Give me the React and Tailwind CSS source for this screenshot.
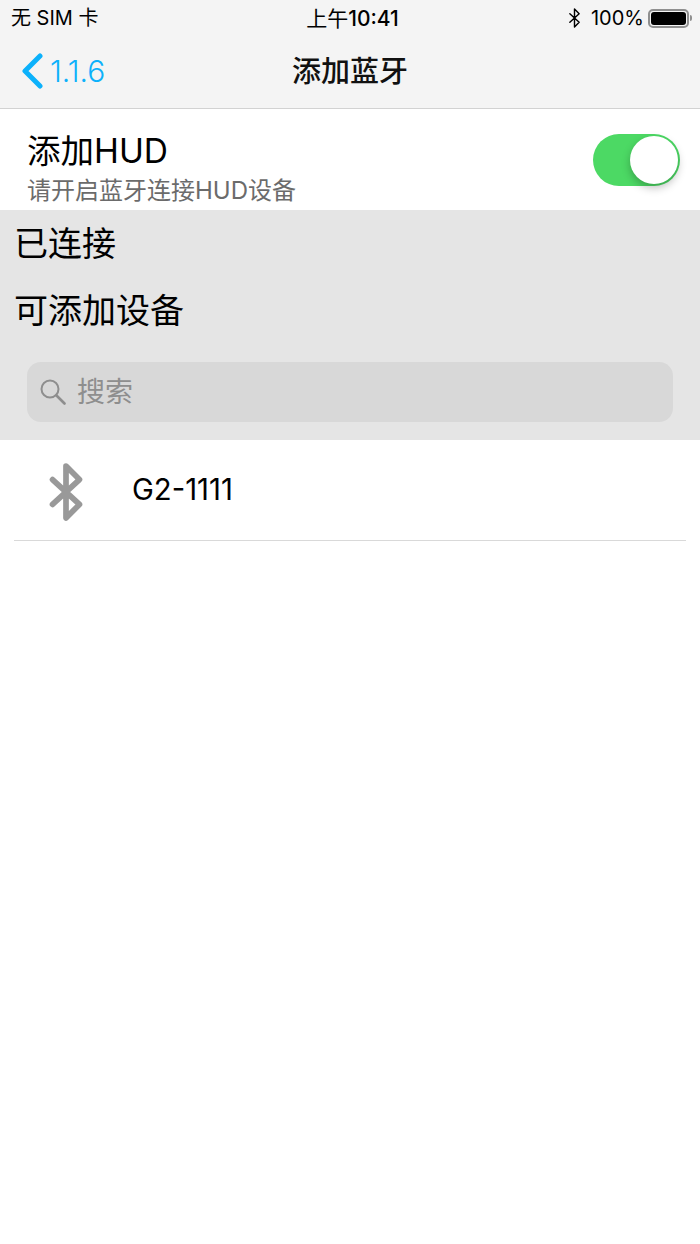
const cjk = 'font-["Inter","Noto_Sans_CJK_SC",sans-serif]';

function BluetoothGlyph({ className, strokeWidth = 2 }) {
  return (
    <svg viewBox="0 0 32 56" fill="none" stroke="currentColor" strokeWidth={strokeWidth} strokeLinecap="round" strokeLinejoin="round" className={className}>
      <path d="M3 16 L29 40 L16 53 V3 L29 16 L3 40" />
    </svg>
  );
}

function StatusBar() {
  return (
    <div className="flex h-9 items-center justify-between pl-[11px] pr-[8px] text-[20px] leading-none text-black">
      <span className="w-[200px]">无 SIM 卡</span>
      <span className="ml-[2px] text-[21px]">上午<span className="font-medium">10:41</span></span>
      <div className="flex w-[200px] items-center justify-end">
        <BluetoothGlyph className="mr-[10px] h-[20px] w-[13px]" strokeWidth={4} />
        <span className="mr-[4px]">100%</span>
        <div className="flex h-[19px] w-[41px] items-center rounded-[5px] border-2 border-[#8f8f8f] p-[1px]">
          <div className="h-full w-full rounded-[3px] bg-black" />
        </div>
        <div className="ml-[1px] h-[6px] w-[2px] rounded-r-full bg-[#8f8f8f]" />
      </div>
    </div>
  );
}

function NavBar() {
  return (
    <div className="relative flex h-[73px] items-center border-b border-[#d2d2d2] pb-[2px]">
      <div className="flex items-center pl-[21px] text-[#0cb1fb]">
        <svg viewBox="0 0 22 36" fill="none" stroke="currentColor" strokeWidth="5" strokeLinecap="round" strokeLinejoin="round" className="h-[36px] w-[22px]">
          <path d="M19 3 L4 18 L19 33" />
        </svg>
        <span className="ml-[7px] text-[30px] font-light leading-none">1.1.6</span>
      </div>
      <div className="absolute inset-x-0 text-center text-[29px] font-medium leading-none text-[#111]">添加蓝牙</div>
    </div>
  );
}

function HudRow() {
  return (
    <div className="flex h-[101px] items-center justify-between bg-white pl-[27px] pr-[20px]">
      <div className="pt-[17px]">
        <div className="text-[33.5px] leading-[38px] text-black">添加HUD</div>
        <div className="mt-[7px] text-[24px] leading-[28px] text-[#6b6b6b]">请开启蓝牙连接HUD设备</div>
      </div>
      <div className="flex h-[52px] w-[87px] items-center justify-end rounded-full bg-[#4cd964] pr-[2px]">
        <div className="h-[48px] w-[48px] rounded-full bg-white shadow-[0_4px_8px_rgba(0,0,0,0.25)]" />
      </div>
    </div>
  );
}

function SearchBar() {
  return (
    <div className="flex h-[60px] items-center rounded-[14px] bg-[#d8d8d8] pl-[13px] text-[#8e8e8e]">
      <svg viewBox="0 0 26 26" fill="none" stroke="currentColor" strokeWidth="2" strokeLinecap="round" className="h-[26px] w-[26px]">
        <circle cx="10" cy="10" r="8.5" />
        <path d="M16.5 16.5 L24.5 24.5" strokeWidth="2.6" />
      </svg>
      <span className="ml-[11px] text-[28px] leading-none">搜索</span>
    </div>
  );
}

export default function App() {
  return (
    <div className={`min-h-[1244px] bg-white ${cjk}`}>
      <div className="bg-[#f4f4f4]">
        <StatusBar />
        <NavBar />
      </div>
      <HudRow />
      <div className="h-[230px] bg-[#e5e5e5]">
        <div className="pl-[14px] pt-[15px] text-[34px] leading-[38px] text-black">已连接</div>
        <div className="pl-[14px] pt-[29px] text-[34px] leading-[38px] text-black">可添加设备</div>
        <div className="px-[27px] pt-[32px]">
          <SearchBar />
        </div>
      </div>
      <div className="mx-[14px] flex h-[101px] items-center border-b border-[#d9d9d9]">
        <BluetoothGlyph className="ml-[35px] mt-[3px] h-[58px] w-[34px] text-[#999999]" strokeWidth={5.5} />
        <span className="ml-[49px] text-[29.3px] leading-none text-black">G2-1111</span>
      </div>
    </div>
  );
}
